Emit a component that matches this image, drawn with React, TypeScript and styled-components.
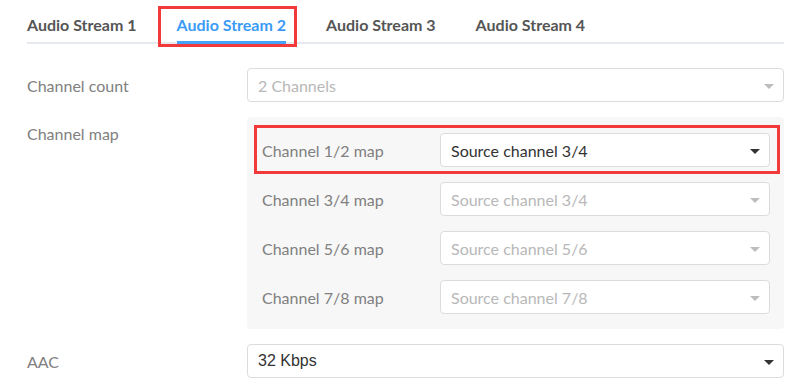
import styled, { createGlobalStyle } from 'styled-components';

const GlobalStyle = createGlobalStyle`
  html, body {
    margin: 0;
    padding: 0;
    background: #fff;
  }
  body {
    font-family: Lato, "Open Sans", sans-serif;
  }
`;

const tabs = ['Audio Stream 1', 'Audio Stream 2', 'Audio Stream 3', 'Audio Stream 4'];

const maps = [
  { label: 'Channel 1/2 map', value: 'Source channel 3/4', active: true },
  { label: 'Channel 3/4 map', value: 'Source channel 3/4', active: false },
  { label: 'Channel 5/6 map', value: 'Source channel 5/6', active: false },
  { label: 'Channel 7/8 map', value: 'Source channel 7/8', active: false },
];

const Select = ({ value, disabled, native }: { value: string; disabled?: boolean; native?: boolean }) => (
  <SelectBox $disabled={disabled} $native={native}>
    <span>{value}</span>
    <Caret $disabled={disabled} />
  </SelectBox>
);

const App = () => {
  return (
    <>
      <GlobalStyle />
      <Page>
        <TabBar>
          {tabs.map((t, i) => (
            <Tab key={t} $active={i === 1}>
              {t}
            </Tab>
          ))}
        </TabBar>

        <FormRow>
          <Label>Channel count</Label>
          <Select value="2 Channels" disabled />
        </FormRow>

        <FormRow $top>
          <Label $top>Channel map</Label>
          <Panel>
            {maps.map((m) => (
              <MapRow key={m.label} $marked={m.active}>
                <MapLabel>{m.label}</MapLabel>
                <Select value={m.value} disabled={!m.active} />
              </MapRow>
            ))}
          </Panel>
        </FormRow>

        <FormRow>
          <Label>AAC</Label>
          <Select value="32 Kbps" native />
        </FormRow>
      </Page>
    </>
  );
};

export default App;

const Page = styled.div`
  width: 757px;
  margin-left: 27px;
  display: flex;
  flex-direction: column;
  gap: 15px;
`;

const TabBar = styled.div`
  display: flex;
  gap: 40px;
  height: 44px;
  border-bottom: 2px solid #e6e9ee;
  box-sizing: border-box;
  margin-bottom: 9px;
`;

const Tab = styled.div<{ $active?: boolean }>`
  position: relative;
  font-size: 16px;
  font-weight: 700;
  line-height: 18px;
  padding-top: 16px;
  height: 44px;
  box-sizing: border-box;
  color: ${(p) => (p.$active ? '#3a9bf5' : '#555')};
  border-bottom: 3px solid ${(p) => (p.$active ? '#45a3f7' : 'transparent')};
  margin-bottom: -2px;

  ${(p) =>
    p.$active &&
    `
    &::after {
      content: '';
      position: absolute;
      left: -19px;
      right: -11px;
      top: 6px;
      bottom: -6px;
      border: 3px solid #f23a3a;
    }
  `}
`;

const FormRow = styled.div<{ $top?: boolean }>`
  display: grid;
  grid-template-columns: 220px 1fr;
  align-items: ${(p) => (p.$top ? 'start' : 'center')};
`;

const Label = styled.div<{ $top?: boolean }>`
  font-size: 16px;
  color: #808080;
  padding-top: ${(p) => (p.$top ? '7px' : '0')};
`;

const Panel = styled.div`
  background: #f7f7f7;
  border-radius: 4px;
  padding: 16px 14px 15px 15px;
  display: flex;
  flex-direction: column;
  gap: 15px;
`;

const MapRow = styled.div<{ $marked?: boolean }>`
  position: relative;
  display: grid;
  grid-template-columns: 178px 1fr;
  align-items: center;

  ${(p) =>
    p.$marked &&
    `
    &::after {
      content: '';
      position: absolute;
      left: -8px;
      right: -10px;
      top: -8px;
      bottom: -7px;
      border: 3px solid #f23a3a;
      pointer-events: none;
    }
  `}
`;

const MapLabel = styled.div`
  font-size: 16px;
  color: #808080;
`;

const SelectBox = styled.div<{ $disabled?: boolean; $native?: boolean }>`
  height: 34px;
  box-sizing: border-box;
  border: 1px solid #dcdcdc;
  border-radius: 4px;
  background: #fff;
  padding: 0 9px 0 10px;
  display: flex;
  align-items: center;
  justify-content: space-between;
  font-size: 16px;
  font-family: ${(p) => (p.$native ? '"Liberation Sans", Arial, sans-serif' : 'Lato, sans-serif')};
  color: ${(p) => (p.$disabled ? '#b8b8b8' : '#333')};
`;

const Caret = styled.span<{ $disabled?: boolean }>`
  width: 0;
  height: 0;
  border-left: 5px solid transparent;
  border-right: 5px solid transparent;
  border-top: 5px solid ${(p) => (p.$disabled ? '#bdbdbd' : '#333')};
  margin-top: 3px;
`;
